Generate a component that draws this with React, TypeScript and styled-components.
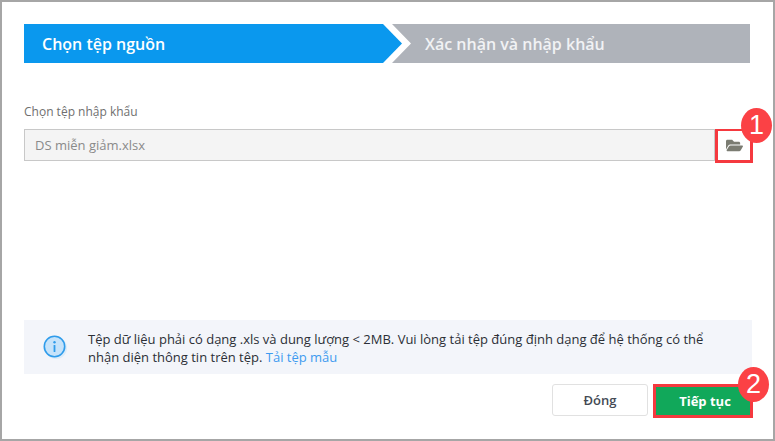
import React from "react";
import styled, { createGlobalStyle } from "styled-components";
import { FaFolderOpen } from "react-icons/fa";

const GlobalStyle = createGlobalStyle`
  html, body {
    margin: 0;
    padding: 0;
    background: #fff;
  }
  * {
    box-sizing: border-box;
  }
`;

const Frame = styled.div`
  position: relative;
  width: 775px;
  height: 441px;
  display: flex;
  flex-direction: column;
  padding: 22px 20px 21px 22px;
  border: 2px solid #a6a6a6;
  background: #fff;
  font-family: "Open Sans", "Noto Sans", sans-serif;
`;

const Stepper = styled.div`
  display: flex;
  height: 39px;
  width: 726px;
`;

const Step = styled.div<{ $active?: boolean }>`
  display: flex;
  align-items: center;
  height: 100%;
  font-size: 16px;
  font-weight: 600;
  color: ${(p) => (p.$active ? "#fff" : "#f1f2f4")};
  background: ${(p) => (p.$active ? "#0a98ee" : "#afb3ba")};
  ${(p) =>
    p.$active
      ? `
    width: 378px;
    padding-left: 18px;
    clip-path: polygon(0 0, 359px 0, 100% 50%, 359px 100%, 0 100%);
  `
      : `
    flex: 1;
    margin-left: -10px;
    padding-left: 33px;
    clip-path: polygon(0 0, 100% 0, 100% 100%, 0 100%, 19px 50%);
  `}
`;

const Label = styled.div`
  margin-top: 40px;
  height: 17px;
  font-size: 12px;
  line-height: 17px;
  color: #6f6f6f;
`;

const FileRow = styled.div`
  display: flex;
  width: 729px;
  height: 34px;
  margin-top: 9px;
`;

const FileInput = styled.div`
  flex: 1;
  height: 32px;
  padding-left: 10px;
  border: 1px solid #c8c8c8;
  background: #f4f4f4;
  font-size: 13px;
  line-height: 30px;
  color: #8a8a8a;
`;

const Highlighted = styled.div`
  border: 3px solid #f5393f;
`;

const FolderButton = styled(Highlighted)`
  width: 38px;
  display: flex;
  align-items: center;
  justify-content: center;
  border-top-width: 2px;
  color: #7b7c72;
  font-size: 17px;
  padding-bottom: 1px;
`;

const Spacer = styled.div`
  flex: 1;
`;

const InfoBox = styled.div`
  display: flex;
  align-items: center;
  width: 728px;
  height: 54px;
  padding-left: 18px;
  background: #f3f5fa;
`;

const InfoText = styled.div`
  margin-left: 20px;
  padding-top: 1px;
  width: 640px;
  font-size: 13px;
  line-height: 18px;
  color: #2b2f36;
`;

const TemplateLink = styled.a`
  color: #3e9bf0;
  text-decoration: none;
`;

const Footer = styled.div`
  display: flex;
  justify-content: flex-end;
  gap: 5px;
  width: 729px;
  margin-top: 10px;
`;

const CloseButton = styled.button`
  width: 96px;
  height: 32px;
  border: 1px solid #e1e1e1;
  border-radius: 3px;
  background: #fff;
  font-family: inherit;
  font-size: 13px;
  font-weight: 600;
  color: #444a55;
`;

const NextHighlight = styled(Highlighted)`
  width: 100px;
  height: 34px;
  padding: 0;
`;

const NextButton = styled.button`
  display: block;
  width: 100%;
  height: 100%;
  padding: 0 0 0 4px;
  border: none;
  background: #11a85a;
  font-family: inherit;
  font-size: 13px;
  font-weight: 700;
  color: #fff;
`;

const Badge = styled.div<{ $top: number; $left: number }>`
  position: absolute;
  top: ${(p) => p.$top}px;
  left: ${(p) => p.$left}px;
  width: 31px;
  height: 35px;
  border-radius: 50%;
  background: #fb4145;
  color: #fff;
  font-family: "Liberation Sans", Arial, sans-serif;
  font-size: 27px;
  line-height: 35px;
  text-align: center;
`;

const InfoIcon = () => (
  <svg width="26" height="26" viewBox="0 0 26 26">
    <circle cx="14" cy="14" r="11" fill="#dcecf9" />
    <circle cx="12.5" cy="12.5" r="10.2" fill="#c6e3fa" stroke="#2f9ceb" strokeWidth="1.6" />
    <rect x="11.6" y="11" width="1.8" height="7" rx="0.6" fill="#2f9ceb" />
    <circle cx="12.5" cy="8.2" r="1.2" fill="#2f9ceb" />
  </svg>
);

const App: React.FC = () => {
  return (
    <Frame>
      <GlobalStyle />
      <Stepper>
        <Step $active>Chọn tệp nguồn</Step>
        <Step>Xác nhận và nhập khẩu</Step>
      </Stepper>
      <Label>Chọn tệp nhập khẩu</Label>
      <FileRow>
        <FileInput>DS miễn giảm.xlsx</FileInput>
        <FolderButton>
          <FaFolderOpen />
        </FolderButton>
      </FileRow>
      <Spacer />
      <InfoBox>
        <InfoIcon />
        <InfoText>
          Tệp dữ liệu phải có dạng .xls và dung lượng &lt; 2MB. Vui lòng tải tệp đúng định dạng để hệ thống có thể
          nhận diện thông tin trên tệp. <TemplateLink>Tải tệp mẫu</TemplateLink>
        </InfoText>
      </InfoBox>
      <Footer>
        <CloseButton>Đóng</CloseButton>
        <NextHighlight>
          <NextButton>Tiếp tục</NextButton>
        </NextHighlight>
      </Footer>
      <Badge $top={106} $left={739}>1</Badge>
      <Badge $top={365} $left={736}>2</Badge>
    </Frame>
  );
};

export default App;
